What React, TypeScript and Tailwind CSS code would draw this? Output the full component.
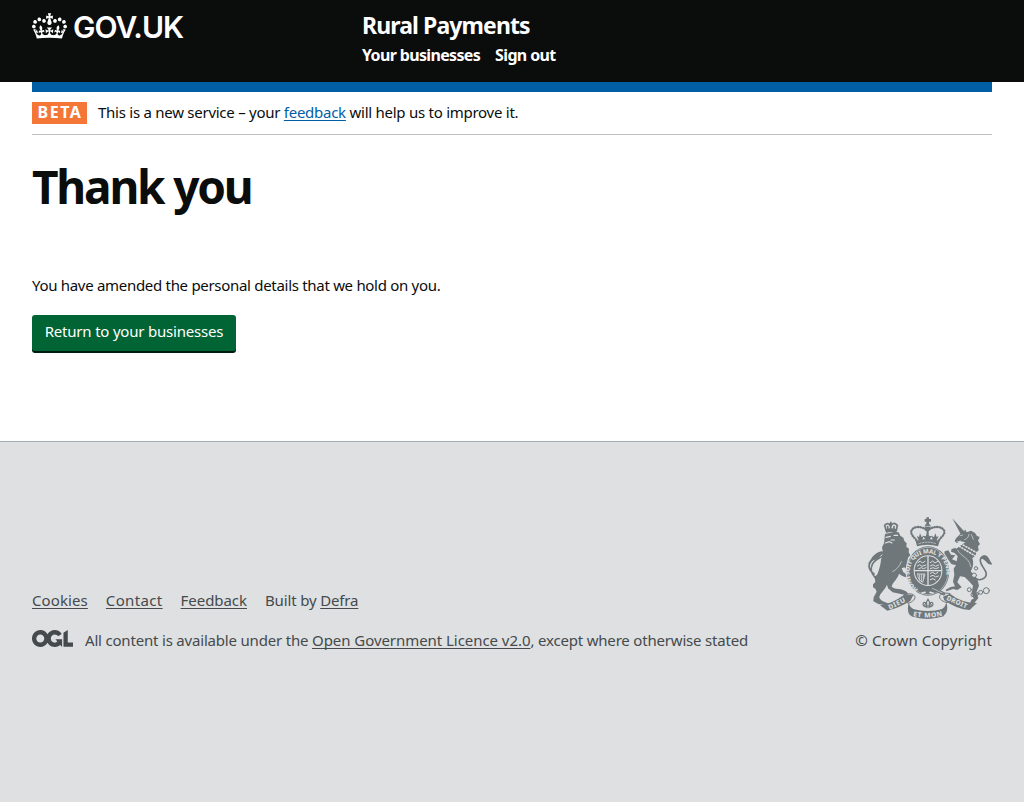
import React from "react";

const CROWN =
  "M25 30.2c3.5 1.5 7.7-.2 9.1-3.7 1.5-3.6-.2-7.8-3.9-9.2-3.6-1.4-7.6.3-9.1 3.9-1.4 3.5.3 7.5 3.9 9zM9 39.5c3.6 1.5 7.8-.2 9.2-3.7 1.5-3.6-.2-7.8-3.9-9.1-3.6-1.5-7.6.2-9.1 3.8-1.4 3.5.3 7.5 3.8 9zM4.4 57.2c3.5 1.5 7.7-.2 9.1-3.8 1.5-3.6-.2-7.7-3.9-9.1-3.5-1.5-7.6.3-9.1 3.8-1.4 3.5.3 7.6 3.9 9.1zm38.3-21.4c3.5 1.5 7.7-.2 9.1-3.8 1.5-3.6-.2-7.7-3.9-9.1-3.6-1.5-7.6.3-9.1 3.8-1.3 3.6.4 7.7 3.9 9.1zm64.4-5.6c-3.6 1.5-7.8-.2-9.1-3.7-1.5-3.6.2-7.8 3.8-9.2 3.6-1.4 7.7.3 9.2 3.9 1.3 3.5-.4 7.5-3.9 9zm15.9 9.3c-3.6 1.5-7.7-.2-9.1-3.7-1.5-3.6.2-7.8 3.7-9.1 3.6-1.5 7.7.2 9.2 3.8 1.5 3.5-.3 7.5-3.8 9zm4.7 17.7c-3.6 1.5-7.8-.2-9.2-3.8-1.5-3.6.2-7.7 3.9-9.1 3.6-1.5 7.7.3 9.2 3.8 1.3 3.5-.4 7.6-3.9 9.1zM89.3 35.8c-3.6 1.5-7.8-.2-9.2-3.8-1.4-3.6.2-7.7 3.9-9.1 3.6-1.5 7.7.3 9.2 3.8 1.4 3.6-.3 7.7-3.9 9.1zM69.7 17.7l8.9 4.7V9.3l-8.9 2.8c-.2-.3-.5-.6-.9-.9L72.4 0H59.6l3.5 11.2c-.3.3-.6.5-.9.9l-8.8-2.8v13.1l8.8-4.7c.3.3.6.7.9.9l-5 15.4v.1c-.2.8-.4 1.6-.4 2.4 0 4.1 3.1 7.5 7 8.1h.2c.3 0 .7.1 1 .1.4 0 .7 0 1-.1h.2c4-.6 7.1-4.1 7.1-8.1 0-.8-.1-1.7-.4-2.4V34l-5.1-15.4c.4-.2.7-.6 1-.9zM66 92.8c16.9 0 32.8 1.1 47.1 3.2 4-16.9 8.9-26.7 14-33.5l-9.6-3.4c1 4.9 1.1 7.2 0 10.2-1.5-1.4-3-4.3-4.2-8.7L108.6 76c2.8-2 5-3.2 7.5-3.3-4.4 9.4-10 11.9-13.6 11.2-4.3-.8-6.3-4.6-5.6-7.9 1-4.7 5.7-5.9 8-.5 4.3-8.7-3-11.4-7.6-8.8 7.1-7.2 7.9-13.5 2.1-21.1-8 6.1-8.1 12.3-4.5 20.8-4.7-5.4-12.1-2.5-9.5 6.2 3.4-5.2 7.9-2 7.2 3.1-.6 4.3-6.4 7.8-13.5 7.2-10.3-.9-10.9-8-11.2-13.8 2.5-.5 7.1 1.8 11 7.3L80.2 60c-4.1 4.4-8 5.3-12.3 5.4 1.4-4.4 8-11.6 8-11.6H55.5s6.4 7.2 7.9 11.6c-4.2-.1-8-1-12.3-5.4l1.4 16.4c3.9-5.5 8.5-7.7 10.9-7.3-.3 5.8-.9 12.8-11.1 13.8-7.2.6-12.9-2.9-13.5-7.2-.7-5 3.8-8.3 7.1-3.1 2.7-8.7-4.6-11.6-9.4-6.2 3.7-8.5 3.6-14.7-4.6-20.8-5.8 7.6-5 13.9 2.2 21.1-4.7-2.6-11.9.1-7.7 8.8 2.3-5.5 7.1-4.2 8.1.5.7 3.3-1.3 7.1-5.7 7.9-3.5.7-9-1.8-13.5-11.2 2.5.1 4.7 1.3 7.5 3.3l-4.7-15.4c-1.2 4.4-2.7 7.2-4.3 8.7-1.1-3-.9-5.3 0-10.2l-9.5 3.4c5 6.9 9.9 16.7 14 33.5 14.8-2.1 30.8-3.2 47.7-3.2z";

function Crown() {
  return (
    <svg className="h-[26px] w-[35px]" viewBox="0 0 132 97" fill="#fff" aria-hidden="true">
      <path d={CROWN} />
    </svg>
  );
}

function OglLogo() {
  return (
    <svg className="h-[17px] w-[41px]" viewBox="0 0 483.2 195.7" preserveAspectRatio="none" fill="#454a4c" aria-hidden="true">
      <path d="M421.5 142.8V.1l-50.7 32.3v161.1h112.4v-50.7zm-122.3-9.6A47.12 47.12 0 0 1 221 97.8c0-26 21.1-47.1 47.1-47.1 16.7 0 31.4 8.7 39.7 21.8l42.7-27.2A97.63 97.63 0 0 0 268.1 0c-36.5 0-68.3 20.1-85.1 49.7A98 98 0 0 0 97.8 0C43.9 0 0 43.9 0 97.8s43.9 97.8 97.8 97.8c36.5 0 68.3-20.1 85.1-49.7a97.76 97.76 0 0 0 149.6 25.4l19.4 22.2h3v-87.8h-80l24.3 27.5zM97.8 145c-26 0-47.1-21.1-47.1-47.1s21.1-47.1 47.1-47.1 47.1 21.1 47.1 47.1S123.8 145 97.8 145" />
    </svg>
  );
}

const INK = "#6f777b";
const PAPER = "#dee0e2";

function Crest() {
  return (
    <svg className="h-[103px] w-[125px]" viewBox="51 36 375 309" aria-hidden="true" strokeLinecap="round" strokeLinejoin="round">
      {/* crown above the shield */}
      <g fill="none" stroke={INK}>
        <path d="M203 112C197 99 181 91 184 78C189 62 218 62 232 78C246 62 277 62 283 78C286 91 268 99 263 112" strokeWidth="7" strokeDasharray="1 7" />
        <path d="M203 112C197 99 181 91 184 78C189 62 218 62 232 78C246 62 277 62 283 78C286 91 268 99 263 112" strokeWidth="3" />
        <path d="M233 76V105" strokeWidth="7" strokeDasharray="1 7" />
        <path d="M233 37V60M224 46H243" strokeWidth="8" strokeLinecap="butt" />
      </g>
      <circle cx="233" cy="65" r="9" fill={INK} />
      <path d="M226 64h15" stroke={PAPER} strokeWidth="2" />
      <g fill={INK}>
        <path d="M197 108Q232 96 269 108L264 124Q233 115 201 124Z" />
        <path d="M207 108l-7-15 7 3 3-11 5 11 6-3-5 15zM227 104l-9-12 9 2 5-12 6 12 9-2-9 12zM249 108l-4-15 7 3 4-11 4 11 6-3-7 15z" />
      </g>
      <path d="M207 116Q233 107 258 116" stroke={PAPER} strokeWidth="2" fill="none" strokeDasharray="5 4" />

      {/* lion */}
      <path d="M72 207C50 190 55 176 70 160C82 144 96 137 101 145C103 159 78 156 67 178C60 192 65 206 75 217L92 207" stroke={INK} strokeWidth="5" fill="none" />
      <path d="M52 178C59 172 61 162 72 151C83 139 95 138 102 145C92 148 88 163 73 165C65 166 59 175 52 178Z" fill={INK} />
      <path d="M105 87L132 81L146 82L151 92L160 98L163 108L170 115L169 125L177 131L176 142L181 151L174 158C171 168 176 184 187 195L196 199L190 205L177 202L163 187L155 190L160 202L177 210L184 216L173 219L157 213L147 206C144 221 126 233 125 245C136 255 154 249 168 259L175 266L166 270L128 262L114 250L111 239C104 257 88 265 88 278C94 290 109 291 118 297L108 301L85 297L70 289L71 277L80 260L76 251L69 247L69 238L76 231L74 218L82 208C88 192 92 178 93 164L99 144L96 127L102 115Z" fill={INK} />
      <path d="M108 97L121 94M132 91L143 91M123 105L133 105M106 114L118 110L126 114" stroke={PAPER} strokeWidth="3.5" fill="none" />
      <path d="M154 170C149 184 139 194 128 200" stroke={PAPER} strokeWidth="2" fill="none" />
      <path d="M108 76L104 61C112 53 118 55 122 64C126 53 134 53 142 61L139 76" fill="none" stroke={INK} strokeWidth="5" />
      <path d="M106 73Q123 67 141 73L139 84Q123 78 108 84ZM117 55h11v5h-11zM120 50h5v14h-5z" fill={INK} />
      <path d="M113 71V65M122 71V63M132 71V65" stroke={INK} strokeWidth="5" />

      {/* unicorn */}
      <path d="M307 40L345 82L333 89Z" fill={INK} />
      <path d="M314 109L317 101L331 86L342 81L345 73L350 82L363 77L375 84L381 93L389 96L384 107L390 117L384 124L386 135L380 142L376 153L367 159C372 175 369 188 362 198L371 209L382 221L387 242L379 262L385 279L373 294L360 296L364 284L371 281L365 264L369 242L357 229L344 216L330 214L322 232L335 247L322 255L309 252L289 259L287 254L302 246L315 244L309 230L313 209L311 191L318 180L305 178L293 162L282 151L284 139L295 136L303 149L316 151L306 163L320 169L323 154L314 144L303 140L305 131L318 132L329 124L346 112L329 108L321 115Z" fill={INK} />
      <path d="M330 92L338 90M344 104C352 102 356 95 357 88M364 89L370 103M320 111L331 108" stroke={PAPER} strokeWidth="2" fill="none" />
      <path d="M328 124L376 153M332 116L380 143" stroke={PAPER} strokeWidth="5" strokeDasharray="3 6" fill="none" />
      <path d="M323 136C336 158 358 157 362 185" stroke={PAPER} strokeWidth="2" fill="none" />
      <path d="M379 222C396 229 414 216 407 200C400 184 386 174 392 161C397 150 411 152 417 168" fill="none" stroke={INK} strokeWidth="5" />
      <path d="M391 160C398 145 414 149 419 166L427 178C409 182 411 164 391 160Z" fill={INK} />
      <g fill="none" stroke={INK} strokeWidth="3">
        <circle cx="409" cy="257" r="9" />
        <circle cx="392" cy="262" r="6" />
        <circle cx="380" cy="267" r="5" />
        <circle cx="369" cy="269" r="6" />
        <circle cx="358" cy="254" r="6" />
        <circle cx="378" cy="190" r="5" />
        <circle cx="372" cy="211" r="7" />
        <circle cx="314" cy="135" r="5" />
      </g>
      <circle cx="372" cy="211" r="5" fill={PAPER} />

      {/* shield and garter */}
      <ellipse cx="234" cy="198" rx="67" ry="77" fill={PAPER} />
      <ellipse cx="234" cy="198" rx="64" ry="74" fill={INK} />
      <ellipse cx="234" cy="198" rx="61" ry="71" fill="none" stroke={PAPER} strokeWidth="1.5" />
      <path id="garter" d="M205 252C163 228 170 148 234 145C298 148 305 228 263 252" fill="none" />
      <text fill={PAPER} fontSize="18" fontWeight="800" fontFamily="Noto Sans, sans-serif" letterSpacing="0">
        <textPath href="#garter" textLength="244">HONI SOIT QUI MAL Y PENSE</textPath>
      </text>
      <ellipse cx="234" cy="197" rx="43" ry="46" fill={PAPER} />
      <ellipse cx="234" cy="197" rx="40" ry="43" fill={INK} />
      <path d="M234 154V240M194 197H274" stroke={PAPER} strokeWidth="4" />
      <path d="M204 173L211 168L217 174L225 169M202 183L209 179L216 184L228 180M206 191L214 188L220 191L228 188" stroke={PAPER} strokeWidth="3" fill="none" />
      <path d="M241 205L248 202L256 207L264 202M241 214L249 211L257 216L265 213M241 224L249 221L256 225" stroke={PAPER} strokeWidth="3" fill="none" />
      <path d="M241 173L248 168L255 174L263 169M241 183L249 179L256 184L266 180M241 191L249 188L256 191L266 188" stroke={PAPER} strokeWidth="3" fill="none" />
      <path d="M203 207H225L218 232Q203 225 203 207ZM209 209V225M215 209V229M221 209V220" stroke={PAPER} strokeWidth="2.5" fill="none" />
      <path d="M216 264L225 262M240 262L249 264" stroke={PAPER} strokeWidth="5" />
      <path d="M247 250L281 266" stroke={INK} strokeWidth="10" />
      <path d="M247 250L281 266" stroke={PAPER} strokeWidth="2" />

      {/* motto scroll */}
      <path d="M90 301Q124 298 165 268L190 270L181 288Q147 309 112 317Z" fill={INK} />
      <path d="M300 266Q335 294 381 294L359 315Q321 314 283 286L279 275Z" fill={INK} />
      <path d="M165 268C191 261 205 276 187 289C173 300 166 292 174 285M300 266C273 259 260 274 275 286C293 298 300 291 291 284" fill="none" stroke={INK} strokeWidth="3" />
      <path d="M176 292C171 316 174 329 186 334Q234 350 281 332C291 326 295 311 289 291Q286 310 270 315Q233 325 193 314Q179 308 176 292Z" fill={INK} />
      <path d="M185 311Q234 325 281 311V334Q234 348 185 334Z" fill={INK} />
      <g fill={PAPER} fontFamily="Noto Sans, sans-serif" fontWeight="800" letterSpacing="0">
        <text transform="translate(119 314) rotate(-27)" fontSize="20" textLength="54">DIEU</text>
        <text transform="translate(288 284) rotate(24)" fontSize="20" textLength="66">DROIT</text>
        <path id="motto" d="M189 333Q234 343 281 331" fill="none" />
        <text fontSize="20">
          <textPath href="#motto" textLength="89">ET MON</textPath>
        </text>
      </g>
      <g fill="none" stroke={INK} strokeWidth="3.5">
        <path d="M234 282C226 292 231 297 231 308M234 282C242 292 237 297 237 308M229 306C218 306 216 292 224 292C229 294 227 299 224 299M239 306C250 306 252 292 244 292C239 294 241 299 244 299M224 303H244" />
      </g>
    </svg>
  );
}

const underlined = "underline decoration-1 underline-offset-2 [text-decoration-skip-ink:none]";

export default function App() {
  return (
    <div className="flex min-h-[802px] flex-col bg-white font-['Noto_Sans',sans-serif] text-[15px] leading-5 tracking-[-0.3px] text-[#0b0c0c]">
      <header className="h-[82px] bg-[#0b0c0c] px-8 text-white">
        <div className="flex">
          <a className="flex w-[330px] pt-[13px]" href="#">
            <Crown />
            <span className="ml-[6px] mt-[-1px] font-['Inter','Liberation_Sans',sans-serif] text-[30px] font-semibold leading-[30px] tracking-[-1px]">GOV.UK</span>
          </a>
          <div className="pt-[10px]">
            <div className="text-[23px] font-bold leading-[30px] tracking-[-0.9px]">Rural Payments</div>
            <nav className="mt-[5px] flex gap-[15px] text-[16px] font-bold tracking-[-0.65px]">
              <a href="#">Your businesses</a>
              <a href="#">Sign out</a>
            </nav>
          </div>
        </div>
      </header>
      <main className="mx-8 h-[359px]">
        <div className="h-[10px] bg-[#005ea5]" />
        <div className="flex h-[43px] items-start border-b border-[#bfc1c3] pt-[10px]">
          <strong className="mr-[11px] flex h-[22px] w-[55px] items-center justify-center bg-[#f47738] pb-[3px] pl-px text-[16px] font-bold leading-5 tracking-[1.5px] text-white">BETA</strong>
          <p className="whitespace-nowrap tracking-[-0.26px]">
            This is a new service – your <a className={`${underlined} text-[#005ea5]`} href="#">feedback</a> will help us to improve it.
          </p>
        </div>
        <h1 className="mt-[26px] text-[46px] font-bold leading-[50px] tracking-[-2.2px]">Thank you</h1>
        <p className="mt-[64px]">You have amended the personal details that we hold on you.</p>
        <button className="mt-5 flex h-[36px] w-[204px] items-center justify-center rounded-[3px] bg-[#006435] pb-1 tracking-[-0.2px] text-white shadow-[0_2px_0_#001e10]">Return to your businesses</button>
      </main>
      <footer className="flex flex-1 justify-between border-t border-[#a1acb2] bg-[#dee0e2] px-8 pt-[75px] text-[#454a4c]">
        <div className="pt-[73px]">
          <ul className="flex gap-[18px]">
            <li><a className={`${underlined} tracking-[0.1px]`} href="#">Cookies</a></li>
            <li><a className={`${underlined} tracking-[0.35px]`} href="#">Contact</a></li>
            <li><a className={`${underlined} tracking-[-0.05px]`} href="#">Feedback</a></li>
            <li className="tracking-[-0.15px]">Built by <a className={underlined} href="#">Defra</a></li>
          </ul>
          <div className="mt-5 flex">
            <OglLogo />
            <p className="ml-3 whitespace-nowrap tracking-[-0.19px]">
              All content is available under the <a className={`${underlined} tracking-[-0.05px]`} href="#">Open Government Licence v2.0</a>, except where otherwise stated
            </p>
          </div>
        </div>
        <div className="flex flex-col items-end">
          <Crest />
          <p className="mt-[10px] whitespace-nowrap tracking-[0.12px]">© Crown Copyright</p>
        </div>
      </footer>
    </div>
  );
}
